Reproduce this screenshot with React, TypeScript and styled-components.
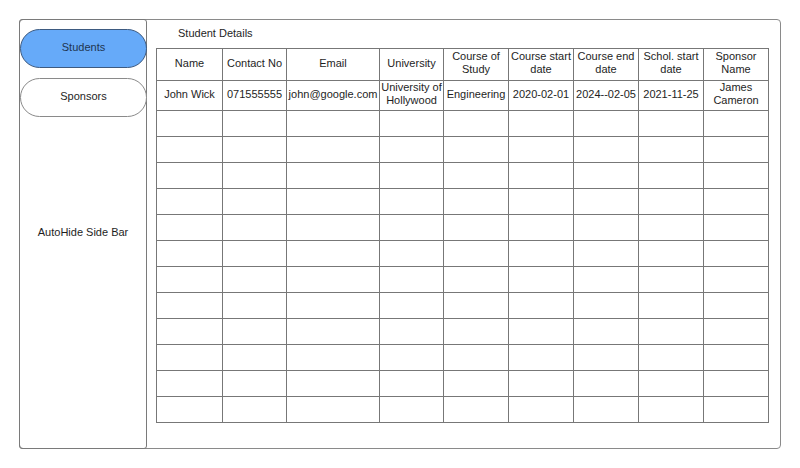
import React from "react";
import styled, { createGlobalStyle } from "styled-components";

const columns = [
  { label: "Name", width: 66 },
  { label: "Contact No", width: 64 },
  { label: "Email", width: 93 },
  { label: "University", width: 64 },
  { label: "Course of Study", width: 65 },
  { label: "Course start date", width: 65 },
  { label: "Course end date", width: 65 },
  { label: "Schol. start date", width: 65 },
  { label: "Sponsor Name", width: 65 },
];

const student = [
  "John Wick",
  "071555555",
  "john@google.com",
  "University of Hollywood",
  "Engineering",
  "2020-02-01",
  "2024--02-05",
  "2021-11-25",
  "James Cameron",
];

const emptyRows = Array.from({ length: 12 }, (_, i) => i);

const App = () => {
  return (
    <>
      <GlobalStyle />
      <Frame>
        <Sidebar>
          <Nav>
            <NavPill $active>Students</NavPill>
            <NavPill>Sponsors</NavPill>
          </Nav>
          <SideLabel>AutoHide Side Bar</SideLabel>
        </Sidebar>
        <Main>
          <Title>Student Details</Title>
          <Table>
            <colgroup>
              {columns.map((c) => (
                <col key={c.label} style={{ width: c.width }} />
              ))}
            </colgroup>
            <thead>
              <HeadRow>
                {columns.map((c) => (
                  <Cell as="th" key={c.label}>
                    {c.label}
                  </Cell>
                ))}
              </HeadRow>
            </thead>
            <tbody>
              <DataRow>
                {student.map((v, i) => (
                  <Cell key={i}>{v}</Cell>
                ))}
              </DataRow>
              {emptyRows.map((r) => (
                <EmptyRow key={r}>
                  {columns.map((c) => (
                    <Cell key={c.label} />
                  ))}
                </EmptyRow>
              ))}
            </tbody>
          </Table>
        </Main>
      </Frame>
    </>
  );
};

export default App;

const GlobalStyle = createGlobalStyle`
  body {
    margin: 0;
    background: #ffffff;
    font-family: "Liberation Sans", Arial, sans-serif;
    color: #1e1e1e;
  }
`;

const Frame = styled.div`
  margin: 19px 0 0 19px;
  width: 762px;
  height: 430px;
  box-sizing: border-box;
  border: 1px solid #8a8a8a;
  border-radius: 4px;
  display: flex;
`;

const Sidebar = styled.div`
  width: 128px;
  margin: -1px 0 -1px -1px;
  box-sizing: border-box;
  border: 1px solid #7a7a7a;
  border-radius: 3px;
  display: grid;
  grid-template: 1fr / 1fr;
`;

const Nav = styled.div`
  grid-area: 1 / 1;
  align-self: start;
  display: flex;
  flex-direction: column;
  gap: 10px;
  padding-top: 9px;
  margin-right: -1px;
`;

const NavPill = styled.div<{ $active?: boolean }>`
  height: 39px;
  box-sizing: border-box;
  border: 1px solid ${(p) => (p.$active ? "#3d5a80" : "#8a8a8a")};
  border-radius: 20px;
  background: ${(p) => (p.$active ? "#66aaf9" : "#ffffff")};
  display: flex;
  align-items: center;
  justify-content: center;
  font-size: 11px;
  color: ${(p) => (p.$active ? "#1f3550" : "#1e1e1e")};
  padding-bottom: 3px;
`;

const SideLabel = styled.div`
  grid-area: 1 / 1;
  align-self: center;
  justify-self: center;
  font-size: 11px;
  padding-bottom: 4px;
`;

const Main = styled.div`
  flex: 1;
  padding: 6px 0 0 9px;
`;

const Title = styled.div`
  font-size: 11px;
  margin-left: 22px;
  height: 14px;
  line-height: 14px;
  margin-bottom: 8px;
`;

const Table = styled.table`
  border-collapse: collapse;
  table-layout: fixed;
  width: 612px;
`;

const Cell = styled.td`
  border: 1px solid #777777;
  padding: 0 1px 3px;
  font-size: 11px;
  font-weight: normal;
  line-height: 13px;
  text-align: center;
  vertical-align: middle;
  color: #1e1e1e;
  white-space: normal;
`;

const HeadRow = styled.tr`
  height: 32px;
`;

const DataRow = styled.tr`
  height: 30px;
`;

const EmptyRow = styled.tr`
  height: 26px;
`;
